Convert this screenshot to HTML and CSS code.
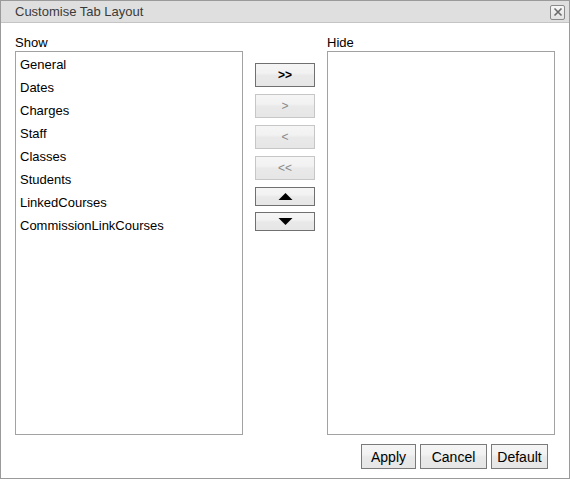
FILE: index.html
```html
<!DOCTYPE html>
<html>
<head>
<meta charset="utf-8">
<link rel="stylesheet" href="styles.css">
</head>
<body>
<div class="dialog">
  <div class="titlebar">
    <span class="title">Customise Tab Layout</span>
    <span class="close">
      <svg width="12" height="12" viewBox="0 0 12 12"><path d="M2.5 2.5 L9.5 9.5 M9.5 2.5 L2.5 9.5" stroke="#6a6a6a" stroke-width="1.6" fill="none"/></svg>
    </span>
  </div>
  <div class="content">
    <div class="label">Show</div>
    <div class="spacer"></div>
    <div class="label">Hide</div>
    <div class="list">
      <div class="item">General</div>
      <div class="item">Dates</div>
      <div class="item">Charges</div>
      <div class="item">Staff</div>
      <div class="item">Classes</div>
      <div class="item">Students</div>
      <div class="item">LinkedCourses</div>
      <div class="item">CommissionLinkCourses</div>
    </div>
    <div class="controls">
      <button class="btn move">&gt;&gt;</button>
      <button class="btn move disabled">&gt;</button>
      <button class="btn move disabled">&lt;</button>
      <button class="btn move disabled">&lt;&lt;</button>
      <button class="btn arrow up"><svg width="16" height="8" viewBox="0 0 16 8"><path d="M8 0 L16 8 L0 8 Z" fill="#000"/></svg></button>
      <button class="btn arrow down"><svg width="16" height="8" viewBox="0 0 16 8"><path d="M0 0 L16 0 L8 8 Z" fill="#000"/></svg></button>
    </div>
    <div class="list"></div>
  </div>
  <div class="footer">
    <button class="btn action apply">Apply</button>
    <button class="btn action cancel">Cancel</button>
    <button class="btn action default">Default</button>
  </div>
</div>
</body>
</html>
```

FILE: styles.css
```css
html, body {
  margin: 0;
  padding: 0;
  background: #fff;
}
.dialog {
  width: 570px;
  height: 479px;
  box-sizing: border-box;
  border: 1px solid #9a9a9a;
  font-family: Arial, "Liberation Sans", sans-serif;
  font-size: 13px;
  color: #000;
  background: #fff;
  display: flex;
  flex-direction: column;
}
.titlebar {
  height: 21px;
  background: #dfdfdf;
  border-bottom: 1px solid #c4c4c4;
  display: flex;
  align-items: center;
  justify-content: space-between;
  padding: 0 4px 0 14px;
}
.title {
  color: #3a3a3a;
  font-size: 13px;
}
.close {
  width: 15px;
  height: 15px;
  box-sizing: border-box;
  border: 1px solid #8a8a8a;
  border-radius: 2px;
  background: linear-gradient(#f6f6f6, #e2e2e2);
  display: flex;
  align-items: center;
  justify-content: center;
  margin-top: 1px;
}
.close svg { display: block; }
.content {
  display: grid;
  grid-template-columns: 228px 60px 228px;
  grid-template-rows: 16px 384px;
  column-gap: 12px;
  row-gap: 0;
  padding: 12px 14px 0 14px;
}
.label {
  font-size: 13px;
  line-height: 15px;
  color: #000;
}
.list {
  box-sizing: border-box;
  border: 1px solid #a2a2a2;
  padding: 5px 0 0 4px;
}
.item {
  height: 23px;
  line-height: 16px;
  font-size: 13px;
}
.controls {
  display: flex;
  flex-direction: column;
  padding-top: 12px;
  gap: 7px;
}
.btn {
  box-sizing: border-box;
  margin: 0;
  padding: 0;
  border: 1px solid #707070;
  background: linear-gradient(#f5f5f5 0%, #f2f2f2 40%, #e9e9e9 52%, #e6e6e6 100%);
  font-family: Arial, "Liberation Sans", sans-serif;
  color: #000;
  display: flex;
  align-items: center;
  justify-content: center;
}
.move {
  width: 60px;
  height: 24px;
  font-size: 12px;
  font-weight: bold;
}
.move.disabled {
  border-color: #c6c6c6;
  color: #8a8a8a;
  font-weight: normal;
}
.arrow {
  width: 60px;
  height: 19px;
}
.controls .down {
  margin-top: -1px;
}
.arrow svg { display: block; width: 15px; height: 7px; }
.footer {
  display: flex;
  justify-content: flex-end;
  gap: 4px;
  padding: 9px 21px 0 0;
}
.action {
  height: 25px;
  font-size: 14px;
  border-color: #7a7a7a;
}
.apply { width: 55px; }
.cancel { width: 67px; }
.default { width: 57px; }
```
